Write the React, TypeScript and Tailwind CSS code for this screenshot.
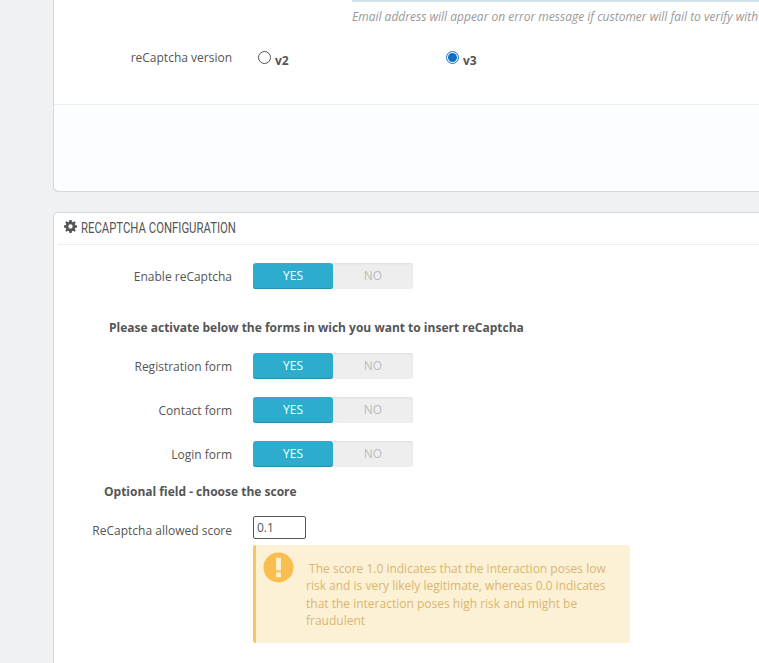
import React from 'react';

const Toggle: React.FC = () => (
  <div className="flex h-[26px] w-[160px] rounded-[3px] text-center text-[12px] leading-[26px]">
    <div className="w-[80px] rounded-[3px] bg-[#2eacce] text-white shadow-[inset_0_-1px_0_#2590ad]">YES</div>
    <div className="w-[80px] rounded-r-[3px] bg-[#eeeeee] text-[#bbbbbb] shadow-[inset_0_1px_2px_#dddddd]">NO</div>
  </div>
);

const ToggleRow: React.FC<{ label: string; className?: string }> = ({ label, className }) => (
  <div className={`flex items-center ${className ?? ''}`}>
    <div className="w-[198px] pr-[21px] pt-[1px] text-right">{label}</div>
    <Toggle />
  </div>
);

const Radio: React.FC<{ label: string; checked?: boolean; className?: string }> = ({ label, checked, className }) => (
  <div className={`flex items-start ${className ?? ''}`}>
    {checked ? (
      <span className="mt-[1px] flex h-[13px] w-[13px] items-center justify-center rounded-full border border-[#1a73c7]">
        <span className="h-[9px] w-[9px] rounded-full bg-[#0f6fc6]" />
      </span>
    ) : (
      <span className="mt-[1px] h-[13px] w-[13px] rounded-full border border-[#555555]" />
    )}
    <span className="ml-[4px] mt-[4px] font-bold leading-[14px] text-[#555555]">{label}</span>
  </div>
);

export default function App() {
  return (
    <div className="h-[663px] w-[759px] overflow-hidden bg-[#eff1f2] pl-[53px] font-['Open_Sans',sans-serif] text-[12px] text-[#555555]">
      <div className="h-[192px] w-[720px] rounded-bl-[5px] border-b-2 border-l border-[#d5d9db] bg-white pl-[1px]">
        <div className="ml-[297px] h-[2px] bg-[#d3e3ec]" />
        <p className="ml-[297px] mt-[6px] whitespace-nowrap text-[12px] italic leading-[17px] text-[#999999]">
          Email address will appear on error message if customer will fail to verify with
        </p>
        <div className="mt-[25px] flex h-[20px] items-start">
          <div className="w-[203px] pr-[26px] text-right leading-[16px]">reCaptcha version</div>
          <Radio label="v2" className="w-[188px]" />
          <Radio label="v3" checked />
        </div>
        <div className="-ml-[1px] mt-[34px] h-[87px] rounded-bl-[5px] border-t border-[#eeeeee] bg-[#fcfdfe]" />
      </div>

      <div className="mt-[20px] h-[460px] w-[720px] rounded-tl-[5px] border-l border-t border-[#d5d9db] bg-white pl-[1px]">
        <div className="ml-[3px] flex h-[32px] items-center border-b border-[#eeeeee] pl-[6px]">
          <svg viewBox="0 0 24 24" className="mb-[4px] h-[13px] w-[13px]" fill="#555555">
            <path
              fillRule="evenodd"
              d="M10 0h4l.7 3.4 2 .8L19.6 2.3l2.1 2.1-1.9 2.9.8 2 3.4.7v4l-3.4.7-.8 2 1.9 2.9-2.1 2.1-2.9-1.9-2 .8L14 24h-4l-.7-3.4-2-.8-2.9 1.9-2.1-2.1 1.9-2.9-.8-2L0 14v-4l3.4-.7.8-2-1.9-2.9 2.1-2.1 2.9 1.9 2-.8zM12 8a4 4 0 1 0 0 8 4 4 0 0 0 0-8z"
            />
          </svg>
          <span className="ml-[4px] inline-block origin-left scale-x-[0.81] whitespace-nowrap font-['Roboto',sans-serif] text-[14px] text-[#555555]">
            RECAPTCHA CONFIGURATION
          </span>
        </div>

        <ToggleRow label="Enable reCaptcha" className="mt-[18px]" />

        <p className="ml-[54px] mt-[30px] font-bold leading-[17px]">
          Please activate below the forms in wich you want to insert reCaptcha
        </p>

        <ToggleRow label="Registration form" className="mt-[17px]" />
        <ToggleRow label="Contact form" className="mt-[18px]" />
        <ToggleRow label="Login form" className="mt-[18px]" />

        <p className="ml-[49px] mt-[16px] font-bold leading-[17px]">Optional field - choose the score</p>

        <div className="mt-[16px] flex">
          <div className="w-[198px] pr-[21px] pt-[6px] text-right leading-[17px]">ReCaptcha allowed score</div>
          <div>
            <input
              readOnly
              value="0.1"
              className="block h-[23px] w-[53px] rounded-[2px] border border-[#555555] bg-white px-[3px] text-[12px] text-[#555555] outline-none"
            />
            <div className="mt-[6px] flex h-[98px] w-[377px] rounded-[3px] border-l-[3px] border-[#f9c55b] bg-[#fdf1d5] pl-[7px] pt-[7px] text-[12px] leading-[17.3px] text-[#d9b56f]">
              <svg viewBox="0 0 32 32" className="h-[31px] w-[31px] shrink-0">
                <circle cx="16" cy="16" r="15.5" fill="#fabd4f" />
                <rect x="13.5" y="6" width="5" height="13" fill="#fdf1d5" />
                <rect x="13.5" y="21" width="5" height="5" fill="#fdf1d5" />
              </svg>
              <p className="ml-[12px] mt-[8px] w-[305px]">
                &nbsp;The score 1.0 indicates that the interaction poses low risk and is very likely legitimate, whereas 0.0 indicates that the interaction poses high risk and might be fraudulent
              </p>
            </div>
          </div>
        </div>
      </div>
    </div>
  );
}
